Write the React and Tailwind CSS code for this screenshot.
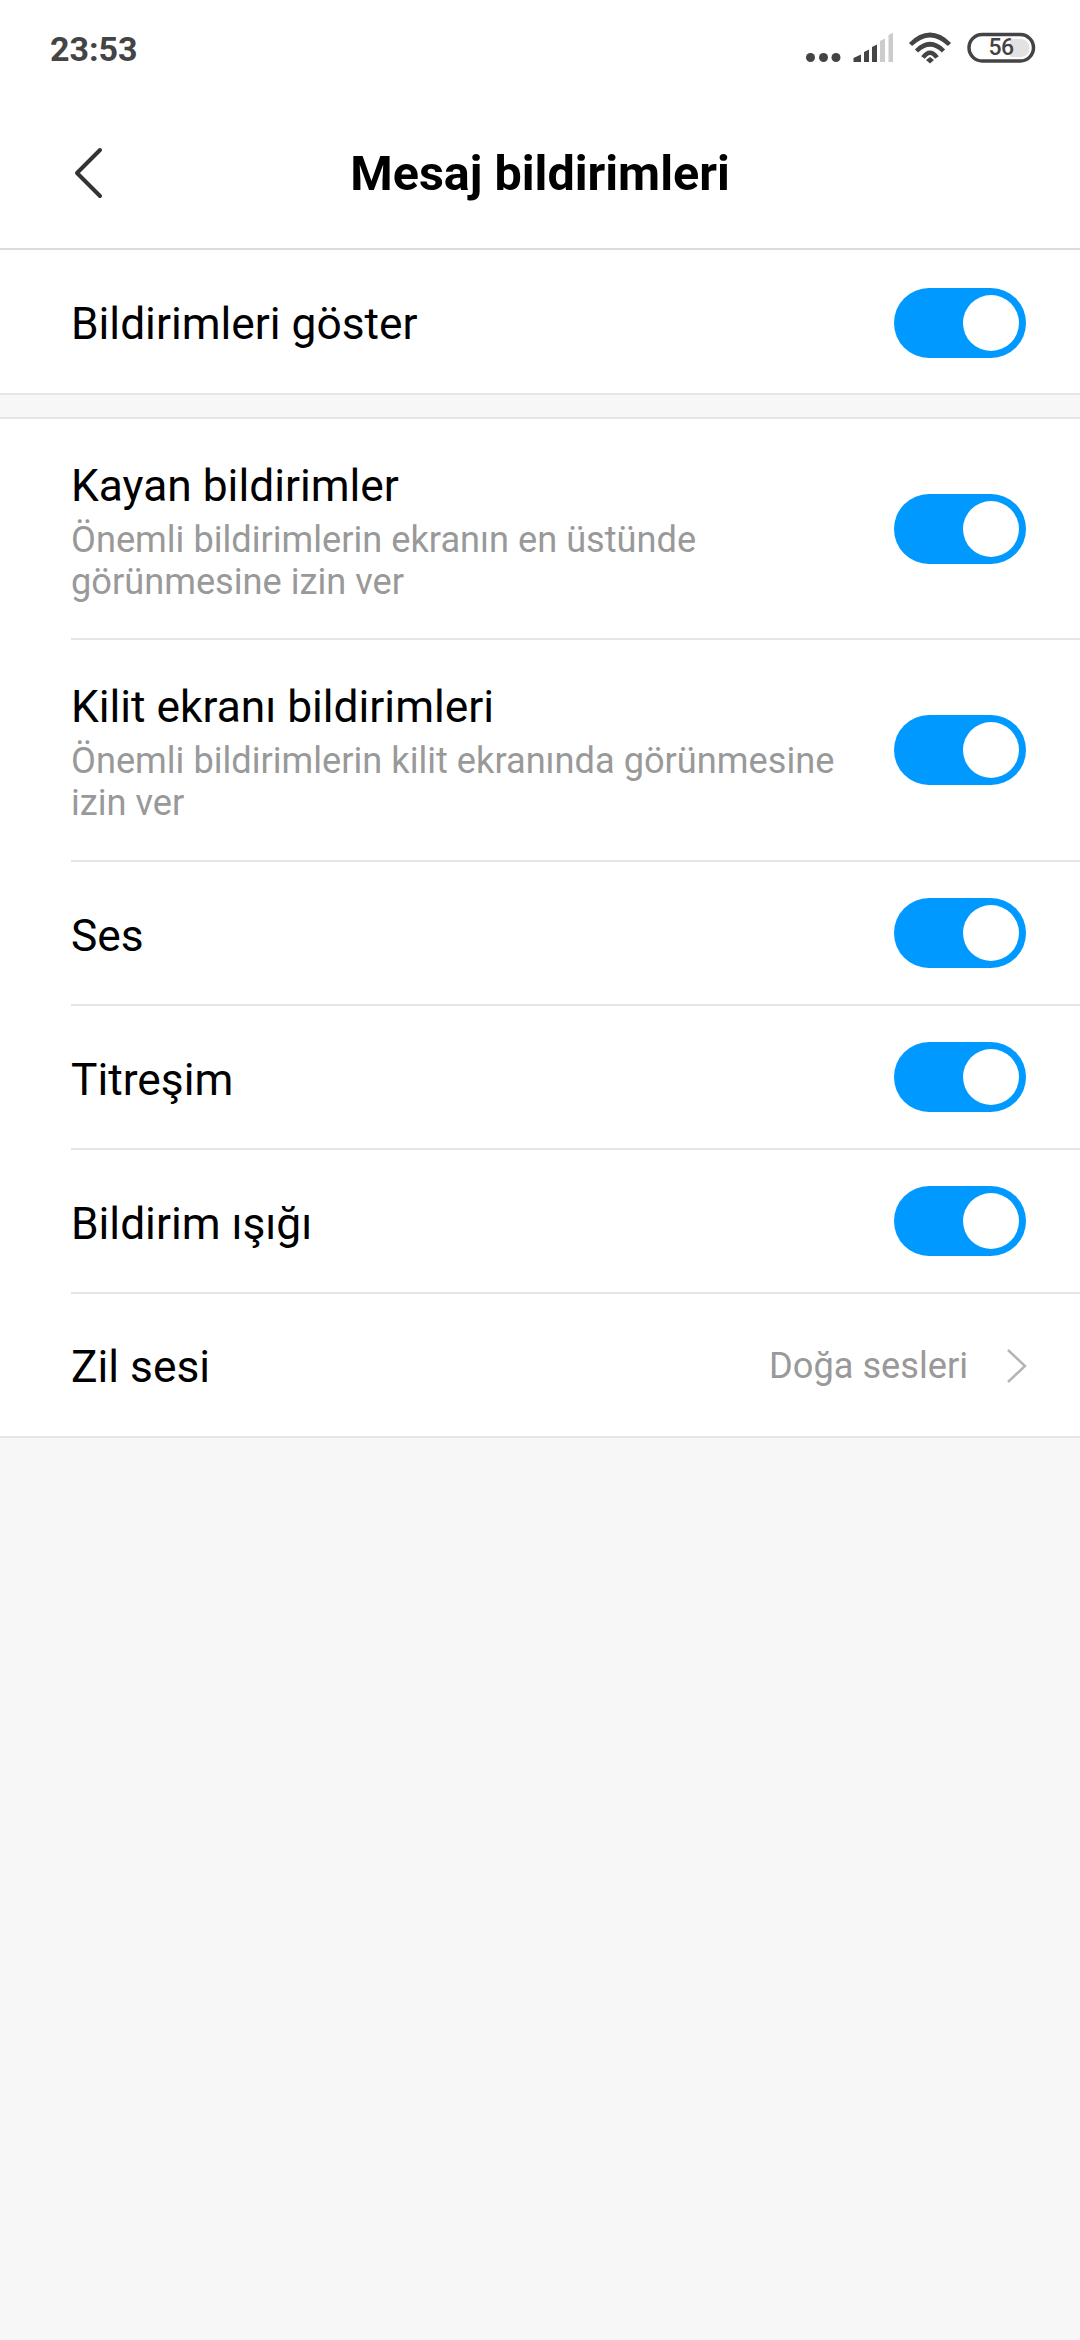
const Toggle = () => (
  <div className="w-[132px] h-[70px] shrink-0 rounded-full bg-[#0099ff] flex items-center justify-end pr-[7px]">
    <div className="w-[56px] h-[56px] rounded-full bg-white" />
  </div>
);

const StatusIcons = () => (
  <svg width="300" height="80" viewBox="0 0 300 80" className="block">
    <circle cx="30.5" cy="47.5" r="4.5" fill="#444" />
    <circle cx="43.5" cy="47.5" r="4.5" fill="#444" />
    <circle cx="56" cy="47.5" r="4.5" fill="#444" />
    <path d="M73.5 52V48L81 44.5V52Z" fill="#444" />
    <path d="M84 52V42L89 39.5V52Z" fill="#444" />
    <path d="M92 52V37L97 34.5V52Z" fill="#444" />
    <path d="M100 52V31L105 28.5V52Z" fill="#ccc" />
    <path d="M108.5 52V25L113 22.7V52Z" fill="#ccc" />
    <path d="M130.5 34.5Q150 15.5 169.5 34.5" fill="none" stroke="#444" strokeWidth="4.5" />
    <path d="M136.5 41Q150 27.5 163.5 41" fill="none" stroke="#444" strokeWidth="4.5" />
    <path d="M143 47.5Q150 38 157 47.5" fill="none" stroke="#444" strokeWidth="4.5" />
    <path d="M146 50L150 47L154 50L150 53.5Z" fill="#444" />
    <path d="M230 29H241C246 29 249.5 33 249.5 38C249.5 43 246 47 241 47H230Z" fill="#e2e2e2" />
    <rect x="189" y="24.5" width="64.5" height="26.5" rx="13.2" fill="none" stroke="#444" strokeWidth="3.5" />
  </svg>
);

const Row = ({ title, sub, h }) => (
  <div className={`pl-[71px] ${h}`}>
    <div className="h-full flex items-center pr-[54px] border-b-2 border-[#e6e6e6]">
      <div className={`flex-1 min-w-0 ${sub ? "pt-[6px]" : "pt-[5px]"}`}>
        <div className="text-[44.3px] leading-[50px] text-black">{title}</div>
        {sub && <div className="text-[36.2px] leading-[42px] text-[#999999] pr-[40px] mt-[8px]">{sub}</div>}
      </div>
      <Toggle />
    </div>
  </div>
);

export default function App() {
  return (
    <div className="w-[1080px] h-[2340px] bg-[#f7f7f7] overflow-hidden font-['Roboto',sans-serif]">
      {/* status bar */}
      <div className="h-[100px] bg-white flex justify-between">
        <div className="pl-[50px] pt-[29px] text-[34px] leading-[40px] font-bold text-[#444444]">23:53</div>
        <div className="relative w-[300px] h-[80px] mt-[10px]">
          <StatusIcons />
          <div className="absolute left-[187px] top-[23px] w-[68px] h-[30px] pt-[1px] flex items-center justify-center text-[23px] font-medium tracking-[-0.5px] text-[#444444]">56</div>
        </div>
      </div>

      {/* header */}
      <div className="h-[150px] bg-white relative flex items-center justify-center border-b-2 border-[#dcdcdc]">
        <svg width="32" height="52" viewBox="0 0 32 52" className="absolute left-[72px] top-[47px]">
          <path d="M28 4L5 27L28 50" transform="translate(0 -1)" fill="none" stroke="#333" strokeWidth="4" strokeLinecap="round" strokeLinejoin="round" />
        </svg>
        <div className="text-[48.5px] font-bold text-black">Mesaj bildirimleri</div>
      </div>

      <div className="bg-white border-b-2 border-[#e6e6e6] h-[145px] flex items-center pl-[71px] pr-[54px] pt-[3px] justify-between">
        <div className="text-[44.3px] text-black pt-[3px]">Bildirimleri göster</div>
        <Toggle />
      </div>

      <div className="h-[22px]" />

      <div className="bg-white border-t-2 border-b-2 border-[#e6e6e6]">
        <Row h="h-[221px]" title="Kayan bildirimler" sub="Önemli bildirimlerin ekranın en üstünde görünmesine izin ver" />
        <Row h="h-[222px]" title="Kilit ekranı bildirimleri" sub="Önemli bildirimlerin kilit ekranında görünmesine izin ver" />
        <Row h="h-[144px]" title="Ses" />
        <Row h="h-[144px]" title="Titreşim" />
        <Row h="h-[144px]" title="Bildirim ışığı" />
        <div className="h-[142px] pl-[71px] pr-[52px] flex items-center justify-between">
          <div className="text-[44.3px] text-black pt-[5px]">Zil sesi</div>
          <div className="flex items-center gap-[38px] pt-[2px]">
            <span className="text-[36.2px] text-[#999999]">Doğa sesleri</span>
            <svg width="22" height="36" viewBox="0 0 22 36">
              <path d="M2 2L19 18L2 34" fill="none" stroke="#b5b5b5" strokeWidth="2.5" />
            </svg>
          </div>
        </div>
      </div>
    </div>
  );
}
